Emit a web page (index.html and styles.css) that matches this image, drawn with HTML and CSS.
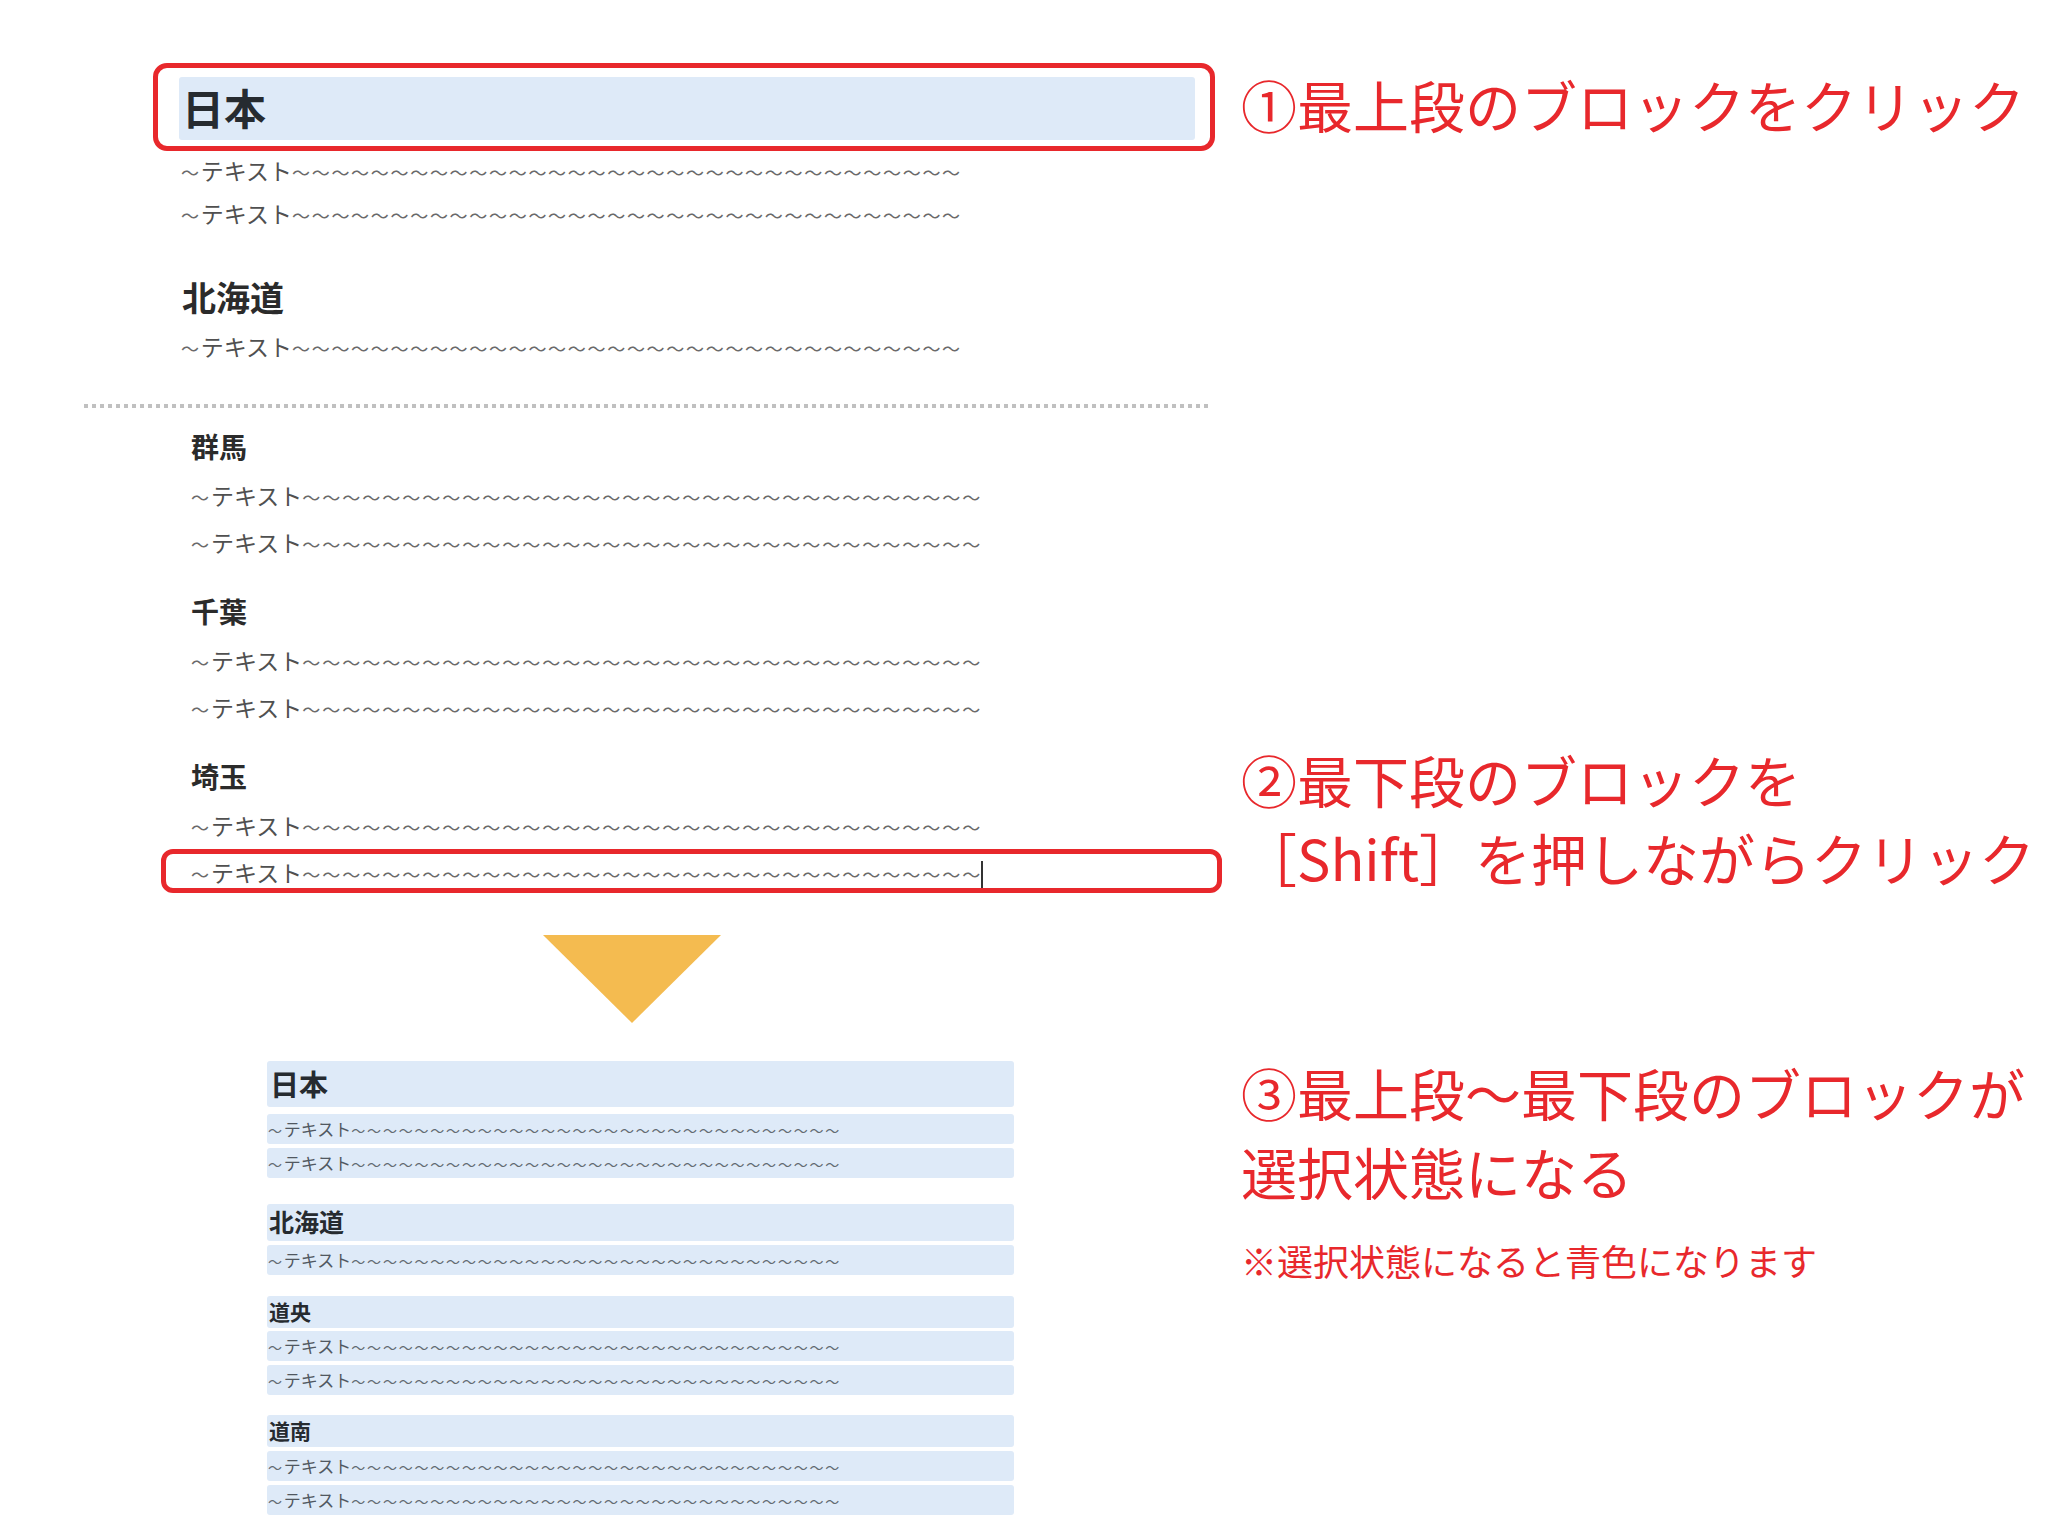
FILE: index.html
```html
<!DOCTYPE html>
<html lang="ja">
<head>
<meta charset="utf-8">
<title>ブロックの複数選択</title>
<link rel="stylesheet" href="styles.css">
</head>
<body>
<main class="page">
  <section class="step step-a">
    <div class="doc doc-a">
      <div class="a-h1 marked-top">日本</div>
      <p class="a-row first"><span class="w">～</span>テキスト<span class="w">～～～～～～～～～～～～～～～～～～～～～～～～～～～～～～～～～～</span></p>
      <p class="a-row"><span class="w">～</span>テキスト<span class="w">～～～～～～～～～～～～～～～～～～～～～～～～～～～～～～～～～～</span></p>
      <div class="a-h2">北海道</div>
      <p class="a-row tight"><span class="w">～</span>テキスト<span class="w">～～～～～～～～～～～～～～～～～～～～～～～～～～～～～～～～～～</span></p>
    </div>
    <div class="note note-1"><p class="big">①最上段のブロックをクリック</p></div>
  </section>

  <hr class="divider">

  <section class="step step-b">
    <div class="doc doc-b">
      <div class="b-h">群馬</div>
      <p class="b-row"><span class="w">～</span>テキスト<span class="w">～～～～～～～～～～～～～～～～～～～～～～～～～～～～～～～～～～</span></p>
      <p class="b-row"><span class="w">～</span>テキスト<span class="w">～～～～～～～～～～～～～～～～～～～～～～～～～～～～～～～～～～</span></p>
      <div class="b-h">千葉</div>
      <p class="b-row"><span class="w">～</span>テキスト<span class="w">～～～～～～～～～～～～～～～～～～～～～～～～～～～～～～～～～～</span></p>
      <p class="b-row"><span class="w">～</span>テキスト<span class="w">～～～～～～～～～～～～～～～～～～～～～～～～～～～～～～～～～～</span></p>
      <div class="b-h">埼玉</div>
      <p class="b-row"><span class="w">～</span>テキスト<span class="w">～～～～～～～～～～～～～～～～～～～～～～～～～～～～～～～～～～</span></p>
      <p class="b-row marked-row"><span class="w">～</span>テキスト<span class="w">～～～～～～～～～～～～～～～～～～～～～～～～～～～～～～～～～～</span><span class="caret"></span></p>
    </div>
    <div class="note note-2">
      <p class="big">②最下段のブロックを</p>
      <p class="big">［Shift］を押しながらクリック</p>
    </div>
  </section>

  <div class="arrow"></div>

  <section class="step step-c">
    <div class="list">
      <div class="sel c-h1">日本</div>
      <p class="sel c-row after-h"><span class="w">～</span>テキスト<span class="w">～～～～～～～～～～～～～～～～～～～～～～～～～～～～～～～</span></p>
      <p class="sel c-row"><span class="w">～</span>テキスト<span class="w">～～～～～～～～～～～～～～～～～～～～～～～～～～～～～～～</span></p>
      <div class="sel c-h2">北海道</div>
      <p class="sel c-row"><span class="w">～</span>テキスト<span class="w">～～～～～～～～～～～～～～～～～～～～～～～～～～～～～～～</span></p>
      <div class="sel c-h3 h3-first">道央</div>
      <p class="sel c-row after-h3"><span class="w">～</span>テキスト<span class="w">～～～～～～～～～～～～～～～～～～～～～～～～～～～～～～～</span></p>
      <p class="sel c-row"><span class="w">～</span>テキスト<span class="w">～～～～～～～～～～～～～～～～～～～～～～～～～～～～～～～</span></p>
      <div class="sel c-h3 h3-next">道南</div>
      <p class="sel c-row"><span class="w">～</span>テキスト<span class="w">～～～～～～～～～～～～～～～～～～～～～～～～～～～～～～～</span></p>
      <p class="sel c-row"><span class="w">～</span>テキスト<span class="w">～～～～～～～～～～～～～～～～～～～～～～～～～～～～～～～</span></p>
    </div>
    <div class="note note-3">
      <p class="big tall">③最上段～最下段のブロックが</p>
      <p class="big tall">選択状態になる</p>
      <p class="small">※選択状態になると青色になります</p>
    </div>
  </section>
</main>
</body>
</html>
```

FILE: styles.css
```css
* {
  box-sizing: border-box;
}

html,
body {
  margin: 0;
  padding: 0;
  background: #ffffff;
}

body {
  font-family: "Noto Sans CJK JP", "Noto Sans", sans-serif;
  color: #2b2b2b;
}

p {
  margin: 0;
}

.page {
  width: 2048px;
  height: 1524px;
  overflow: hidden;
  padding-top: 77px;
}

.step {
  display: grid;
  grid-template-columns: 1241px 1fr;
  align-items: start;
}

/* ---------- Section A ---------- */
.doc-a {
  margin-left: 179px;
  width: 1016px;
}

.a-h1 {
  position: relative;
  height: 63px;
  line-height: 60px;
  padding-left: 3px;
  font-size: 42px;
  font-weight: 700;
  color: #262b30;
  background: #deeaf8;
  border-radius: 3px;
}

.marked-top::after {
  content: "";
  position: absolute;
  left: -26px;
  right: -20px;
  top: -14px;
  bottom: -11px;
  border: 5px solid #e8282c;
  border-radius: 14px;
}

.a-row {
  height: 43px;
  line-height: 43px;
  padding-left: 2px;
  font-size: 23px;
  color: #505050;
  white-space: nowrap;
}

.a-row .w {
  font-size: 18px;
  letter-spacing: 1.7px;
  color: #6a6a6a;
}

.a-row.first {
  margin-top: 9px;
}

.a-row.tight {
  margin-top: 2px;
}

.a-h2 {
  margin-top: 38px;
  height: 50px;
  line-height: 48px;
  padding-left: 3px;
  font-size: 34px;
  font-weight: 700;
  color: #2b2b2b;
}

/* ---------- Divider ---------- */
.divider {
  display: block;
  margin: 36px 0 0 84px;
  width: 1128px;
  height: 4px;
  border: 0;
  background: repeating-linear-gradient(90deg, #c0c0c0 0 4px, transparent 4px 8px);
}

/* ---------- Section B ---------- */
.step-b {
  margin-top: 14px;
}

.doc-b {
  margin-left: 189px;
  width: 1016px;
}

.b-h {
  height: 50px;
  line-height: 48px;
  padding-left: 2px;
  font-size: 28px;
  font-weight: 700;
  color: #2b2b2b;
}

.b-row + .b-h {
  margin-top: 21px;
}

.b-row {
  position: relative;
  height: 47px;
  line-height: 47px;
  padding-left: 2px;
  font-size: 23px;
  color: #505050;
  white-space: nowrap;
}

.b-row .w {
  font-size: 18px;
  letter-spacing: 2px;
  color: #6a6a6a;
}

.marked-row::after {
  content: "";
  position: absolute;
  left: -28px;
  right: -17px;
  top: 0;
  bottom: 3px;
  border: 5px solid #e8282c;
  border-radius: 12px;
}

.caret {
  display: inline-block;
  width: 2px;
  height: 30px;
  margin-left: -1px;
  vertical-align: middle;
  background: #333333;
}

/* ---------- Arrow ---------- */
.arrow {
  margin: 39px 0 0 543px;
  width: 178px;
  height: 88px;
  background: #f4bb50;
  clip-path: polygon(0 0, 100% 0, 50% 100%);
}

/* ---------- Section C ---------- */
.step-c {
  margin-top: 38px;
}

.list {
  margin-left: 267px;
  width: 747px;
}

.sel {
  background: #deeaf8;
  border-radius: 3px;
}

.c-h1 {
  height: 46px;
  line-height: 44px;
  padding-left: 3px;
  font-size: 29px;
  font-weight: 700;
  color: #262b30;
}

.c-h2 {
  margin-top: 26px;
  height: 37px;
  line-height: 35px;
  padding-left: 2px;
  font-size: 25px;
  font-weight: 700;
  color: #262b30;
}

.c-h3 {
  height: 32px;
  line-height: 31px;
  padding-left: 2px;
  font-size: 21px;
  font-weight: 700;
  color: #262b30;
}

.h3-first {
  margin-top: 21px;
}

.h3-next {
  margin-top: 20px;
}

.c-row {
  margin-top: 4px;
  height: 30px;
  line-height: 30px;
  padding-left: 1px;
  font-size: 17px;
  color: #515861;
  white-space: nowrap;
}

.c-row .w {
  font-size: 14px;
  letter-spacing: 1.8px;
  color: #636a72;
}

.c-row.after-h {
  margin-top: 7px;
}

.c-row.after-h3 {
  margin-top: 3px;
}

/* ---------- Notes ---------- */
.note {
  color: #e8282c;
  white-space: nowrap;
}

.big {
  font-size: 56px;
  font-weight: 400;
  line-height: 60px;
}

.note-1 {
  margin-top: -3px;
}

.note-2 {
  padding-top: 318px;
}

.note-2 .big {
  line-height: 78px;
}

.note-3 {
  margin-top: -9px;
}

.note-3 .big.tall {
  line-height: 79px;
}

.small {
  margin-top: 25px;
  font-size: 36px;
  line-height: 50px;
}
```
